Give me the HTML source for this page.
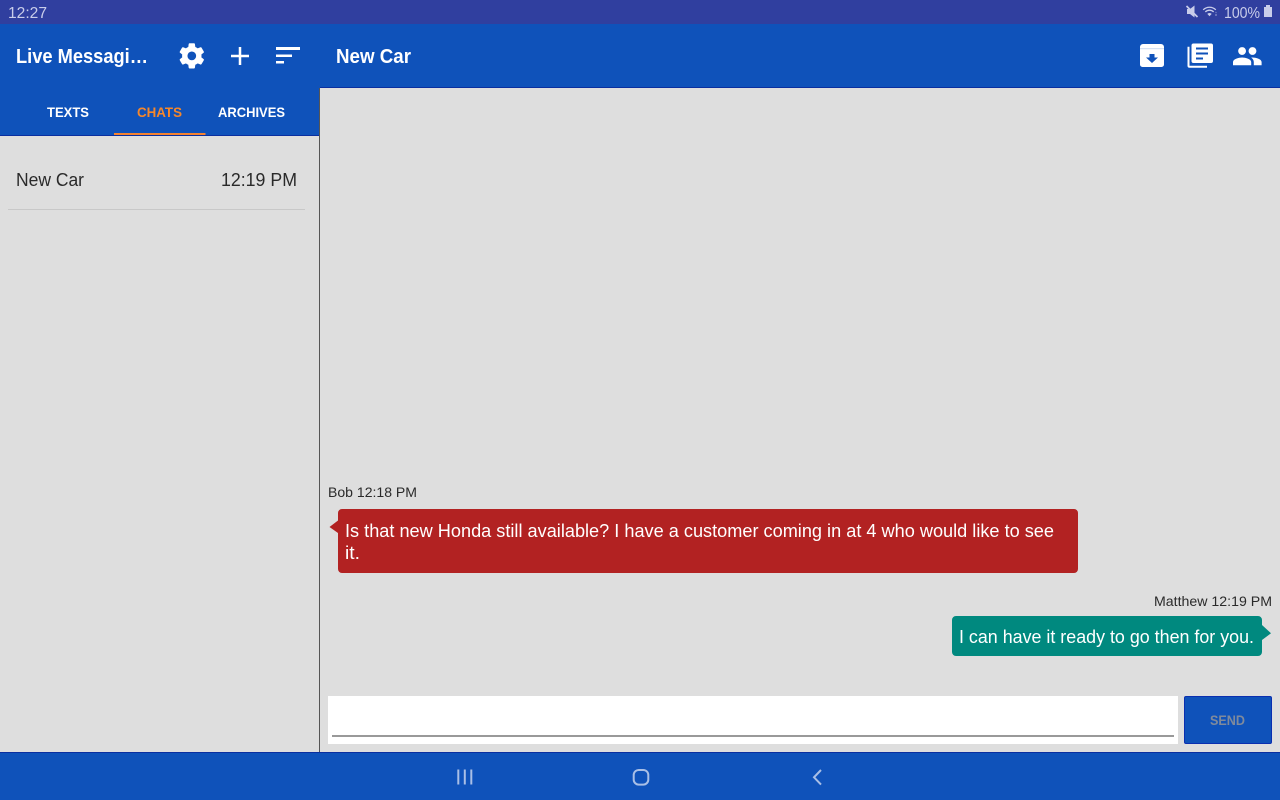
<!DOCTYPE html>
<html><head><meta charset="utf-8"><style>
html,body{margin:0;padding:0;width:1280px;height:800px;overflow:hidden;background:#dedede}
svg{display:block}
text{font-family:"Liberation Sans",sans-serif}
.b{font-weight:bold}
</style></head><body>
<svg width="1280" height="800" viewBox="0 0 1280 800" xmlns="http://www.w3.org/2000/svg">
<rect width="1280" height="800" fill="#dedede"/>
<rect width="1280" height="24" fill="#303f9f"/>
<rect y="24" width="1280" height="64" fill="#0f52ba"/>
<rect y="87" x="320" width="960" height="1" fill="#0a2fa0"/>
<rect y="88" width="320" height="48" fill="#0f52ba"/>
<rect y="135" width="320" height="1" fill="#0a2fa0"/>
<rect x="319" y="88" width="1" height="664" fill="#555"/>
<rect y="752" width="1280" height="48" fill="#0f52ba"/>
<rect y="752" width="1280" height="1" fill="#0a2fa0"/>

<text x="8" y="18" font-size="16" fill="#c9cdea" textLength="39" lengthAdjust="spacingAndGlyphs">12:27</text>
<text x="1224" y="18" font-size="16" fill="#c9cdea" textLength="36" lengthAdjust="spacingAndGlyphs">100%</text>
<!-- status icons -->
<g fill="#c9cdea">
<path d="M1187 9h3l4.500-3.500v12l-4.500-3.500h-3z"/>
<path d="M1186.500 6l11 11" stroke="#c9cdea" stroke-width="1.700"/>
<path d="M1264 7h2V5h4v2h2v10h-8z"/>
<circle cx="1216" cy="15" r=".9" opacity=".6"/>
<circle cx="1216" cy="12.500" r=".8" opacity=".4"/>
</g>
<g fill="none" stroke="#c9cdea" stroke-width="1.300">
<path d="M1203.200 9.800a9 9 0 0 1 12.600 0"/>
<path d="M1205.300 11.900a6 6 0 0 1 8.400 0"/>
</g>
<path d="M1207.300 13.900a3 3 0 0 1 4.400 0l-2.200 2.400z" fill="#c9cdea"/>

<text class="b" x="16" y="63" font-size="20" fill="#fff" textLength="132" lengthAdjust="spacingAndGlyphs">Live Messagi…</text>
<text class="b" x="336" y="63" font-size="20" fill="#fff" textLength="75" lengthAdjust="spacingAndGlyphs">New Car</text>

<!-- gear -->
<g transform="translate(178.800,43.400) scale(1.040)">
<path fill="#fff" stroke="#fff" stroke-width=".6" fill-rule="evenodd" d="M21.400 13.500a9.500 9.500 0 0 0 0-3l2.300-1.800a.6.6 0 0 0 .1-.7l-2.200-3.800a.6.6 0 0 0-.7-.2l-2.700 1.100a9 9 0 0 0-2.600-1.500L15.200.7a.6.6 0 0 0-.5-.5h-4.400a.6.6 0 0 0-.5.500L9.400 3.600a9 9 0 0 0-2.600 1.500L4.100 4a.6.6 0 0 0-.7.2L1.200 8a.6.6 0 0 0 .1.700l2.300 1.800a9.500 9.500 0 0 0 0 3l-2.300 1.800a.6.6 0 0 0-.1.700l2.200 3.800a.6.6 0 0 0 .7.2l2.700-1.100a9 9 0 0 0 2.600 1.500l.4 2.900a.6.6 0 0 0 .5.500h4.400a.6.6 0 0 0 .5-.5l.4-2.900a9 9 0 0 0 2.600-1.500l2.700 1.100a.6.6 0 0 0 .7-.2l2.200-3.800a.6.6 0 0 0-.1-.7zM12.500 16.500a4.500 4.500 0 1 1 0-9 4.500 4.500 0 0 1 0 9z"/>
</g>
<!-- plus -->
<path d="M231 56h18M240 47v18" stroke="#fff" stroke-width="2.500" fill="none"/>
<!-- sort -->
<g fill="#fff"><rect x="276" y="47" width="24" height="3"/><rect x="276" y="54.500" width="16" height="2.500"/><rect x="276" y="61" width="8" height="2.500"/></g>

<!-- archive -->
<path fill="#fff" fill-rule="evenodd" d="M1143 44h18a3 3 0 0 1 3 3v17.500a2.500 2.500 0 0 1-2.500 2.500h-19a2.500 2.500 0 0 1-2.500-2.500V47a3 3 0 0 1 3-3zM1149.500 54v3.500h-3.500l6 5.500 6-5.500h-3.500V54z"/>
<rect x="1140" y="48.500" width="24" height=".6" fill="#0f52ba" opacity=".35"/>
<!-- library -->
<path fill="#fff" fill-rule="evenodd" d="M1193.500 43.500h17.500a2 2 0 0 1 2 2V61a2 2 0 0 1-2 2h-17.500a2 2 0 0 1-2-2V45.500a2 2 0 0 1 2-2zM1196 47.500v2h12v-2zM1196 52.500v2h12v-2zM1196 57.500v2h7v-2z"/>
<path fill="none" stroke="#fff" stroke-width="2" d="M1188.500 46.700V65.700a1 1 0 0 0 1 1h17.500"/>
<!-- people -->
<path transform="translate(1231.700,40.600) scale(1.300)" fill="#fff" d="M16 11c1.660 0 2.990-1.340 2.990-3S17.660 5 16 5c-1.660 0-3 1.340-3 3s1.340 3 3 3zm-8 0c1.660 0 2.990-1.340 2.990-3S9.660 5 8 5C6.340 5 5 6.340 5 8s1.340 3 3 3zm0 2c-2.330 0-7 1.170-7 3.500V19h14v-2.500c0-2.330-4.670-3.500-7-3.500zm8 0c-.29 0-.62.02-.97.05 1.160.84 1.970 1.970 1.970 3.450V19h6v-2.500c0-2.330-4.670-3.500-7-3.500z"/>

<text class="b" x="47" y="117" font-size="14" fill="#fff" textLength="42" lengthAdjust="spacingAndGlyphs">TEXTS</text>
<text class="b" x="137" y="117" font-size="14" fill="#f5872b" textLength="45" lengthAdjust="spacingAndGlyphs">CHATS</text>
<text class="b" x="218" y="117" font-size="14" fill="#fff" textLength="67" lengthAdjust="spacingAndGlyphs">ARCHIVES</text>
<rect x="114" y="133" width="91.500" height="2" fill="#f5822f"/>

<text x="16" y="186" font-size="18" fill="#2a2a2a" textLength="68" lengthAdjust="spacingAndGlyphs">New Car</text>
<text x="221" y="186" font-size="18" fill="#2a2a2a" textLength="76" lengthAdjust="spacingAndGlyphs">12:19 PM</text>
<rect x="8" y="209" width="297" height="1" fill="#c8c8c8"/>

<text x="328" y="497" font-size="14" fill="#2a2a2a" textLength="89" lengthAdjust="spacingAndGlyphs">Bob  12:18 PM</text>
<path fill="#b22222" d="M342 509h732a4 4 0 0 1 4 4v56a4 4 0 0 1-4 4H342a4 4 0 0 1-4-4v-36l-8.500-6 8.500-6.500V513a4 4 0 0 1 4-4z"/>
<text x="345" y="537" font-size="18" fill="#fff" textLength="709" lengthAdjust="spacingAndGlyphs">Is that new Honda still available? I have a customer coming in at 4 who would like to see</text>
<text x="345" y="559" font-size="18" fill="#fff" textLength="15" lengthAdjust="spacingAndGlyphs">it.</text>

<text x="1154" y="606" font-size="14" fill="#2a2a2a" textLength="118" lengthAdjust="spacingAndGlyphs">Matthew  12:19 PM</text>
<path fill="#00897f" d="M956 616h302a4 4 0 0 1 4 4v5l9 8.300-9 6.700v12a4 4 0 0 1-4 4H956a4 4 0 0 1-4-4v-32a4 4 0 0 1 4-4z"/>
<text x="959" y="643" font-size="18" fill="#fff" textLength="295" lengthAdjust="spacingAndGlyphs">I can have it ready to go then for you.</text>

<rect x="328" y="696" width="850" height="48" fill="#fff"/>
<rect x="332" y="735" width="842" height="2" fill="#999"/>
<rect x="1184.500" y="696.500" width="87" height="47" rx="1.500" fill="#0f52ba" stroke="#0a2fb0"/>
<text class="b" x="1210" y="725" font-size="14" fill="#7f8a9c" textLength="35" lengthAdjust="spacingAndGlyphs">SEND</text>

<g fill="none" stroke="#a9bfe6" stroke-width="2">
<path d="M458.300 769.500v15M464.800 769.500v15M471.300 769.500v15"/>
<rect x="633.700" y="770" width="14.600" height="14.600" rx="5"/>
<path d="M821 770l-7 7.300 7 7.300"/>
</g>
</svg>
</body></html>
